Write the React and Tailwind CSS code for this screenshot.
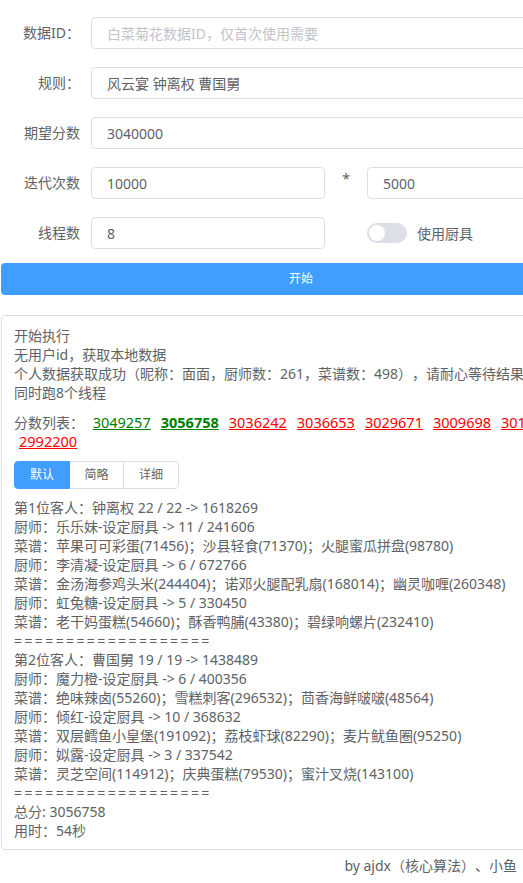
import React from "react";

const scores = [
  { v: "3049257", c: "text-[#008000]" },
  { v: "3056758", c: "text-[#008000] font-bold" },
  { v: "3036242", c: "text-[#ff0000]" },
  { v: "3036653", c: "text-[#ff0000]" },
  { v: "3029671", c: "text-[#ff0000]" },
  { v: "3009698", c: "text-[#ff0000]" },
  { v: "3012345", c: "text-[#ff0000]" },
  { v: "2992200", c: "text-[#ff0000]" },
];

const lines = [
  "第1位客人：钟离权 22 / 22 -> 1618269",
  "厨师：乐乐妹-设定厨具 -> 11 / 241606",
  "菜谱：苹果可可彩蛋(71456)；沙县轻食(71370)；火腿蜜瓜拼盘(98780)",
  "厨师：李清凝-设定厨具 -> 6 / 672766",
  "菜谱：金汤海参鸡头米(244404)；诺邓火腿配乳扇(168014)；幽灵咖喱(260348)",
  "厨师：虹兔糖-设定厨具 -> 5 / 330450",
  "菜谱：老干妈蛋糕(54660)；酥香鸭脯(43380)；碧绿响螺片(232410)",
  "=",
  "第2位客人：曹国舅 19 / 19 -> 1438489",
  "厨师：魔力橙-设定厨具 -> 6 / 400356",
  "菜谱：绝味辣卤(55260)；雪糕刺客(296532)；茴香海鲜啵啵(48564)",
  "厨师：倾红-设定厨具 -> 10 / 368632",
  "菜谱：双层鳕鱼小皇堡(191092)；荔枝虾球(82290)；麦片鱿鱼圈(95250)",
  "厨师：姒露-设定厨具 -> 3 / 337542",
  "菜谱：灵芝空间(114912)；庆典蛋糕(79530)；蜜汁叉烧(143100)",
  "=",
  "总分: 3056758",
  "用时：54秒",
];

const inputCls =
  "h-8 border border-[#dcdfe6] rounded-[4px] px-[15px] text-[14px] text-[#606266] placeholder:text-[#c0c4cc] outline-none bg-white min-w-0";

function Label({ children }) {
  return <div className="w-[79px] shrink-0 text-right mr-[11px] leading-8">{children}</div>;
}

export default function App() {
  return (
    <div
      className="w-[523px] h-[883px] overflow-hidden bg-white text-[14px] text-[#606266] [text-spacing-trim:space-all]"
      style={{ fontFamily: '"Noto Sans", "Noto Sans CJK SC", sans-serif' }}
    >
      <div className="w-[601px] pl-px pt-[17px]">
        <div className="flex items-center mb-[18px]">
          <Label>数据ID：</Label>
          <input className={inputCls + " flex-1"} placeholder="白菜菊花数据ID，仅首次使用需要" />
        </div>
        <div className="flex items-center mb-[18px]">
          <Label>规则：</Label>
          <input className={inputCls + " flex-1"} defaultValue="风云宴 钟离权 曹国舅" />
        </div>
        <div className="flex items-center mb-[18px]">
          <Label>期望分数</Label>
          <input className={inputCls + " flex-1"} defaultValue="3040000" />
        </div>
        <div className="flex items-center mb-[18px]">
          <Label>迭代次数</Label>
          <input className={inputCls + " w-[234px]"} defaultValue="10000" />
          <div className="w-[42px] text-center self-start leading-[24px]">*</div>
          <input className={inputCls + " flex-1"} defaultValue="5000" />
        </div>
        <div className="flex items-center mb-[14px]">
          <Label>线程数</Label>
          <input className={inputCls + " w-[234px]"} defaultValue="8" />
          <div className="w-[42px]" />
          <div className="w-10 h-5 rounded-full bg-[#dcdfe6] flex items-center p-[2px]">
            <div className="w-4 h-4 rounded-full bg-white" />
          </div>
          <span className="ml-[10px]">使用厨具</span>
        </div>
        <button className="w-full h-8 rounded-[4px] bg-[#409eff] text-white text-[12px]">开始</button>

        <div className="mt-5 border border-[#dcdfe6] rounded-[4px] px-[12px] pt-[10px] pb-[9px] leading-[19px] whitespace-nowrap">
          <div>开始执行</div>
          <div>无用户id，获取本地数据</div>
          <div>个人数据获取成功（昵称：面面，厨师数：261，菜谱数：498），请耐心等待结果</div>
          <div>同时跑8个线程</div>
          <div className="mt-[11px] whitespace-normal">
            <span>分数列表：</span>{" "}
            {scores.map((s, i) => (
              <span key={i} className={"inline-block mx-[5px] underline text-[14.5px] " + s.c}>
                {s.v}
              </span>
            ))}
          </div>
          <div className="mt-[10px] inline-flex text-[12px] leading-none">
            <span className="h-7 w-14 flex items-center justify-center bg-[#409eff] text-white border border-[#409eff] rounded-l-[4px]">
              默认
            </span>
            <span className="h-7 w-[54px] flex items-center justify-center border-y border-r border-[#dcdfe6] bg-white">
              简略
            </span>
            <span className="h-7 w-[55px] flex items-center justify-center border-y border-r border-[#dcdfe6] bg-white rounded-r-[4px]">
              详细
            </span>
          </div>
          <div className="mt-[9px]">
            {lines.map((l, i) =>
              l === "=" ? (
                <div key={i} className="tracking-[2.4px]">===================</div>
              ) : (
                <div key={i}>{l}</div>
              )
            )}
          </div>
        </div>
      </div>
      <div className="mt-[6px] pr-[6px] text-right leading-[19px]">by ajdx（核心算法）、小鱼</div>
    </div>
  );
}
